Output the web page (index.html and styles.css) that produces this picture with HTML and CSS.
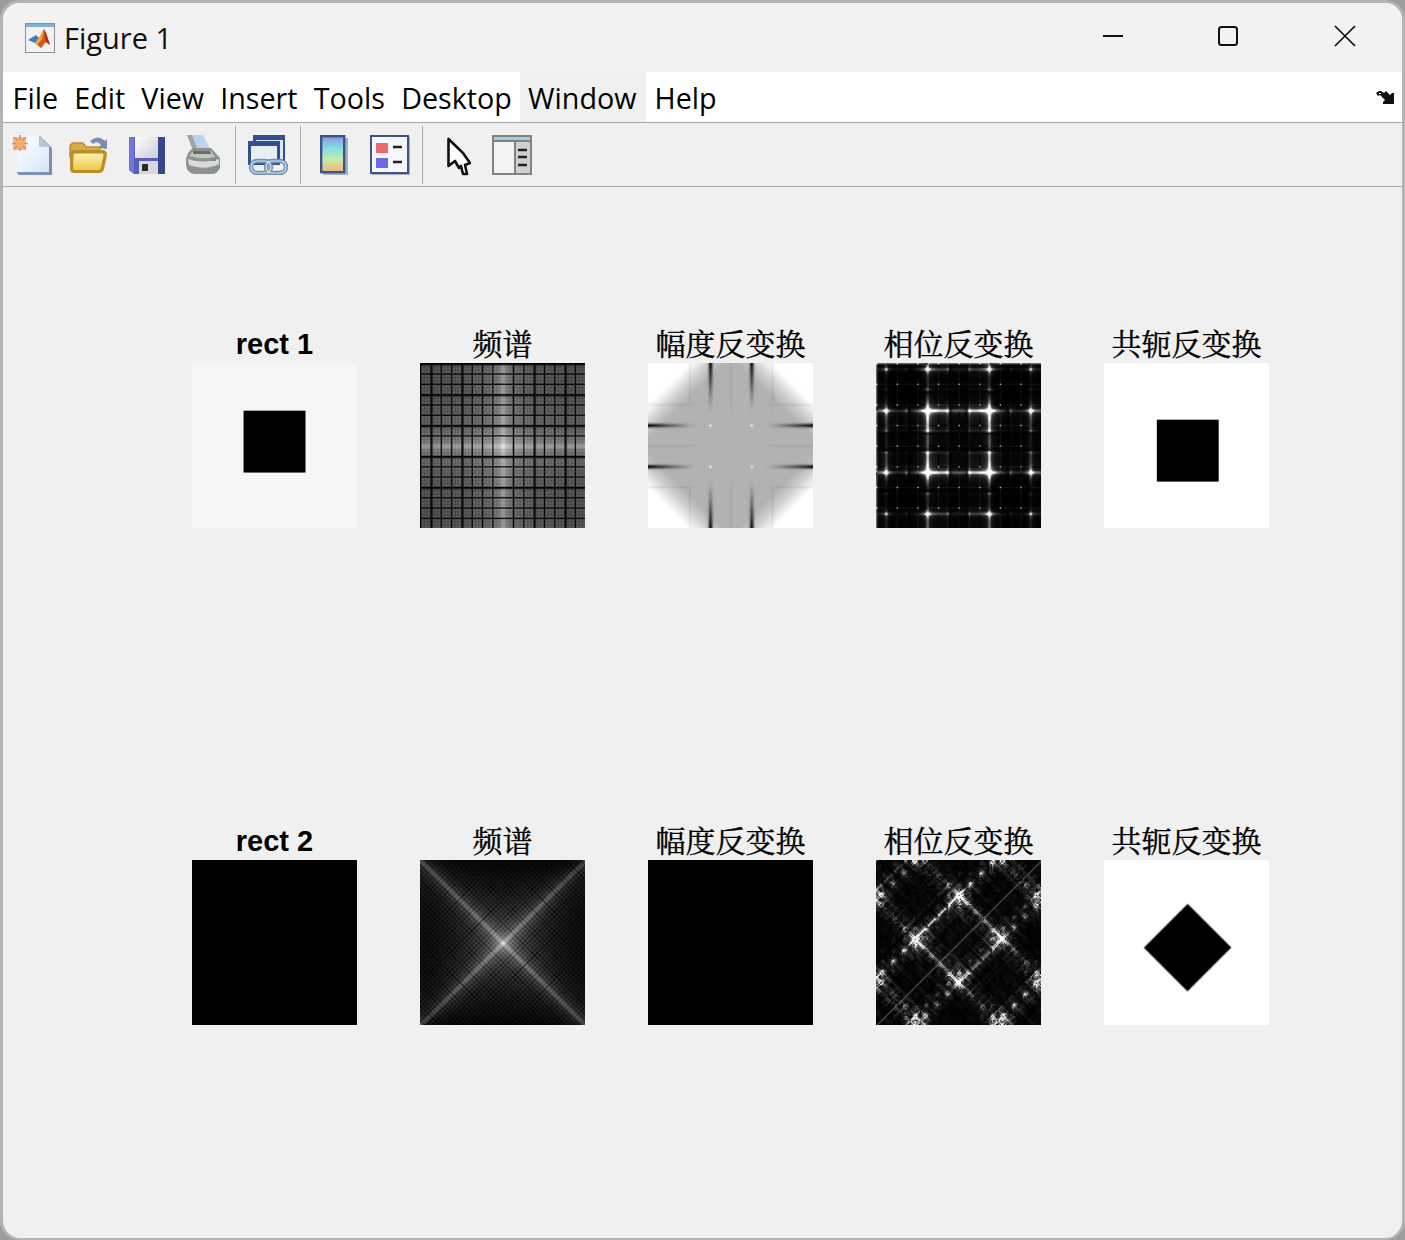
FILE: index.html
```html
<!DOCTYPE html>
<html lang="zh">
<head>
<meta charset="utf-8">
<title>Figure 1</title>
<link rel="stylesheet" href="styles.css">
</head>
<body>
<div class="window">
  <header class="titlebar">
    <svg class="appicon" viewBox="0 0 30 30">
      <rect x="0.5" y="0.5" width="29" height="29" fill="#f2f2f2" stroke="#8a8f96"/>
      <rect x="1" y="1" width="28" height="3" fill="#7fb0d6"/>
      <path d="M3 17 L11 12 L14 15 L10 20 Z" fill="#3f7fc0"/>
      <path d="M10 20 L14 15 L19 6 L21 10 L25 22 L21 19 L16 25 Z" fill="#d9581c"/>
      <path d="M14 15 L19 6 L17 16 L12 22 L10 20 Z" fill="#f0a93a"/>
      <path d="M19 6 L21 10 L25 22 L21 19 Z" fill="#a83214"/>
    </svg>
    <span class="title">Figure 1</span>
    <div class="winbtns">
      <svg class="winbtn" viewBox="0 0 22 22"><path d="M1 11 H21" stroke="#111" stroke-width="2"/></svg>
      <svg class="winbtn winbtn-max" viewBox="0 0 22 22"><rect x="2" y="2" width="18" height="18" rx="2.5" fill="none" stroke="#111" stroke-width="2"/></svg>
      <svg class="winbtn" viewBox="0 0 22 22"><path d="M1 1 L21 21 M21 1 L1 21" stroke="#111" stroke-width="1.7"/></svg>
    </div>
  </header>

  <nav class="menubar">
    <span class="menuitem">File</span>
    <span class="menuitem">Edit</span>
    <span class="menuitem">View</span>
    <span class="menuitem">Insert</span>
    <span class="menuitem">Tools</span>
    <span class="menuitem">Desktop</span>
    <span class="menuitem menuitem-active">Window</span>
    <span class="menuitem">Help</span>
    <svg class="dock" viewBox="0 0 19 15"><path d="M0 3 L3 1 L5 1 L8 3 L10 1 L14 5 L16 3 L18 3 L18 14 L7 14 L7 12 L9 10 L6 7 L4 5 L2 6 Z" fill="#111"/><path d="M3 3 L5 3 L5 4 L3 4 Z" fill="#fff"/></svg>
  </nav>

  <div class="toolbar">
    <svg class="tool tool-new" viewBox="0 0 40 40">
      <defs>
        <linearGradient id="docgrad" x1="0" y1="0" x2="1" y2="1">
          <stop offset="0" stop-color="#ffffff"/><stop offset="1" stop-color="#d6e6f8"/>
        </linearGradient>
        <linearGradient id="foldgrad" x1="0" y1="0" x2="0" y2="1">
          <stop offset="0" stop-color="#fff3ac"/><stop offset="1" stop-color="#eec94e"/>
        </linearGradient>
        <linearGradient id="panelgrad" x1="0" y1="0" x2="1" y2="1">
          <stop offset="0" stop-color="#ffffff"/><stop offset="1" stop-color="#c9ccd6"/>
        </linearGradient>
      </defs>
      <path d="M5 1 H28 L40 13 V40 H8 Q5 40 5 37 Z" fill="#7f90b6"/>
      <path d="M5 1 H27 L37 12 V37 H5 Z" fill="url(#docgrad)"/>
      <path d="M27 1 L38 12 H27 Z" fill="#b9c6e0"/>
      <rect x="1" y="2" width="13" height="13" fill="#eeb596"/>
      <path d="M0 8.5 H16 M8 0 V16 M2 2 L14 14 M14 2 L2 14" stroke="#e58a60" stroke-width="1.6"/>
      <circle cx="8" cy="8.5" r="3.6" fill="#f2b460"/>
    </svg>
    <svg class="tool tool-open" viewBox="0 0 38 40">
      <path d="M21 6 Q29 -1 36 6 L38 4 L38 14 L29 13 L32 10 Q28 5 24 9 Z" fill="#7d8fa8"/>
      <path d="M1 13 Q1 8 5 8 H14 L17 12 H31 V22 H1 Z" fill="#d8ad48" stroke="#b68f2c" stroke-width="1.4"/>
      <path d="M1 20 Q1 15 5 15 H33 Q38 15 38 20 L35 34 Q34 38 30 38 H5 Q1 38 1 34 Z" fill="#b98f28"/>
      <path d="M4.5 20 Q4.5 18.500 6 18.500 H33 Q35 18.500 34.500 20 L32 32 Q31.500 35 29 35 H6 Q4 35 4 33 Z" fill="url(#foldgrad)"/>
    </svg>
    <svg class="tool tool-save" viewBox="0 0 38 40">
      <path d="M1 2 H37 V39 H6 L1 35 Z" fill="#5b5fbc"/>
      <path d="M1 2 H6 V39 L1 35 Z" fill="#6f78d8"/>
      <path d="M30 2 H37 V39 H30 Z" fill="#36478f"/>
      <rect x="7" y="2" width="23" height="21" fill="url(#panelgrad)"/>
      <rect x="11" y="26" width="19" height="13" fill="#d6d8dc"/>
      <rect x="14" y="29" width="6" height="7" fill="#2a2a2a"/>
    </svg>
    <svg class="tool tool-print" viewBox="0 0 36 40">
      <path d="M2 0 H18 L26 16 H10 Z" fill="#bcd3ee"/>
      <path d="M2 0 H7 L13 16 H8 Z" fill="#a0a4a8"/>
      <path d="M1 24 Q3 15 9 13 H26 L35 23 V33 Q32 39 27 39 H9 Q2 38 1 30 Z" fill="#8f918f"/>
      <path d="M3 24 Q18 29 34 24 V29 Q20 36 4 30 Z" fill="#dadcda"/>
      <path d="M8 16 H26 L30 22 Q18 25 4 21 Z" fill="#c4c6c4"/>
      <path d="M8 16 H25 L26 19 H8 Z" fill="#6a6c6a"/>
      <rect x="26" y="23" width="5" height="3" fill="#6f9a6f"/>
    </svg>
    <span class="sep sep-a"></span>
    <svg class="tool tool-link" viewBox="0 0 40 40">
      <rect x="5" y="0" width="32" height="27" fill="#32508f"/>
      <rect x="8" y="5" width="27" height="20" fill="#dfe8f2"/>
      <rect x="0" y="6" width="32" height="24" fill="#32508f"/>
      <rect x="3" y="11" width="26" height="17" fill="#e9eef4"/>
      <g fill="none" stroke="#6f8fb4" stroke-width="4.400">
        <rect x="3" y="26" width="20" height="12" rx="6"/>
        <rect x="18" y="26" width="20" height="12" rx="6"/>
      </g>
      <g fill="none" stroke="#dbe4ee" stroke-width="1.200">
        <rect x="3" y="26" width="20" height="12" rx="6"/>
        <rect x="18" y="26" width="20" height="12" rx="6"/>
      </g>
    </svg>
    <span class="sep sep-b"></span>
    <svg class="tool tool-cbar" viewBox="0 0 28 40">
      <defs>
        <linearGradient id="cbargrad" x1="0" y1="0" x2="0" y2="1">
          <stop offset="0" stop-color="#8d92e0"/><stop offset="0.35" stop-color="#86dfe4"/>
          <stop offset="0.65" stop-color="#c8ecaa"/><stop offset="1" stop-color="#f0b078"/>
        </linearGradient>
      </defs>
      <rect x="3" y="3" width="25" height="37" fill="#a8b0c0"/>
      <rect x="1.2" y="1.2" width="23" height="36" fill="url(#cbargrad)" stroke="#3c5488" stroke-width="2.4"/>
    </svg>
    <svg class="tool tool-legend" viewBox="0 0 40 40">
      <rect x="2" y="2" width="38" height="38" fill="#aab"/>
      <rect x="1" y="1" width="37" height="37" fill="#f4f7fb" stroke="#3c5488" stroke-width="2"/>
      <rect x="6" y="8" width="12" height="10" fill="#e86a6a"/>
      <rect x="6" y="23" width="12" height="10" fill="#6a6ae8"/>
      <path d="M23 12 H32 M23 27 H32" stroke="#222" stroke-width="2.4"/>
    </svg>
    <span class="sep sep-c"></span>
    <svg class="tool tool-arrow" viewBox="0 0 24 40">
      <path d="M1.500 3 V30 L8 25 L12 32 L14 30 L16 38 L20 38 L18 29 L23 27 L16 17 Z" fill="#fff" stroke="#111" stroke-width="2.6" stroke-linejoin="round"/>
    </svg>
    <svg class="tool tool-dock" viewBox="0 0 40 40">
      <rect width="40" height="40" fill="#7b8288"/>
      <rect x="2" y="2" width="36" height="3" fill="#a9cbe0"/>
      <rect x="2" y="7" width="20" height="31" fill="#f3f3f3"/>
      <rect x="24" y="7" width="14" height="31" fill="#d0d0d0"/>
      <path d="M26 15 H35 M26 22 H35 M26 30 H35" stroke="#222" stroke-width="2.4"/>
    </svg>
  </div>

  <main class="figure">
    <div class="axes"><h2 class="axtitle axtitle-en">rect 1</h2><canvas class="plot" width="128" height="128" data-shape="rect" data-mode="orig"></canvas></div>
    <div class="axes"><h2 class="axtitle">频谱</h2><canvas class="plot" width="128" height="128" data-shape="rect" data-mode="spec"></canvas></div>
    <div class="axes"><h2 class="axtitle">幅度反变换</h2><canvas class="plot" width="128" height="128" data-shape="rect" data-mode="mag"></canvas></div>
    <div class="axes"><h2 class="axtitle">相位反变换</h2><canvas class="plot" width="128" height="128" data-shape="rect" data-mode="phase"></canvas></div>
    <div class="axes"><h2 class="axtitle">共轭反变换</h2><canvas class="plot" width="128" height="128" data-shape="rect" data-mode="conj"></canvas></div>
    <div class="axes"><h2 class="axtitle axtitle-en">rect 2</h2><canvas class="plot" width="128" height="128" data-shape="diamond" data-mode="black"></canvas></div>
    <div class="axes"><h2 class="axtitle">频谱</h2><canvas class="plot" width="128" height="128" data-shape="diamond" data-mode="spec"></canvas></div>
    <div class="axes"><h2 class="axtitle">幅度反变换</h2><canvas class="plot" width="128" height="128" data-shape="diamond" data-mode="black"></canvas></div>
    <div class="axes"><h2 class="axtitle">相位反变换</h2><canvas class="plot" width="128" height="128" data-shape="diamond" data-mode="phase"></canvas></div>
    <div class="axes"><h2 class="axtitle">共轭反变换</h2><canvas class="plot" width="128" height="128" data-shape="diamond" data-mode="conj"></canvas></div>
  </main>
</div>
<script src="app.js"></script>
</body>
</html>
```

FILE: styles.css
```css
* { box-sizing: border-box; }
html, body { margin: 0; padding: 0; background: #9d9d9d; }
.window {
  width: 1405px;
  height: 1240px;
  display: flex;
  flex-direction: column;
  background: #f0f0f0;
  border: 3px solid #b4b4b4;
  border-bottom-width: 2px;
  border-radius: 20px;
  overflow: hidden;
}
.titlebar {
  height: 69px;
  flex: none;
  display: flex;
  align-items: center;
  background: #f3f2f2;
  padding: 0 0 0 22px;
}
.appicon { width: 30px; height: 30px; margin-top: 1px; }
.title {
  margin-left: 9px;
  font: 29px "Open Sans", "Noto Sans", sans-serif;
  color: #111;
}
.winbtns { margin-left: auto; display: flex; align-items: center; gap: 93px; padding-right: 46px; margin-top: -3px; }
.winbtn { width: 22px; height: 22px; display: block; }
.winbtn-max { margin-right: 2px; }
.menubar {
  height: 51px;
  flex: none;
  display: flex;
  align-items: center;
  background: #fff;
  border-bottom: 1px solid #a3a3a3;
  padding-left: 1.500px;
}
.menuitem {
  height: 100%;
  padding: 3px 8.100px 0;
  font: 28.700px/46px "Open Sans", "Noto Sans", sans-serif;
  color: #000;
}
.menuitem-active { background: #f0f0f0; padding-right: 10px; }
.dock { width: 19px; height: 15px; margin-left: auto; margin-right: 7px; }
.toolbar {
  height: 64px;
  flex: none;
  display: flex;
  align-items: center;
  background: #f0f0f0;
  border-bottom: 1px solid #a9a9a9;
  padding-left: 9px;
}
.tool { display: block; height: 40px; flex: none; filter: blur(0.5px); }
.tool-new { width: 40px; }
.tool-open { width: 38px; margin-left: 17px; }
.tool-save { width: 38px; margin-left: 21px; }
.tool-print { width: 36px; margin-left: 19px; }
.sep { width: 1px; height: 58px; background: #a9a9a9; flex: none; }
.sep-a { margin-left: 14px; }
.tool-link { width: 40px; margin-left: 12px; }
.sep-b { margin-left: 12px; }
.tool-cbar { width: 28px; margin-left: 19px; }
.tool-legend { width: 40px; margin-left: 22px; }
.sep-c { margin-left: 12px; }
.tool-arrow { width: 24px; margin-left: 24px; margin-top: 2px; }
.tool-dock { width: 40px; margin-left: 21px; }
.figure {
  flex: 1;
  min-height: 0;
  display: grid;
  grid-template-columns: repeat(5, 165px);
  grid-auto-rows: 497px;
  column-gap: 63px;
  padding: 138px 0 0 189px;
}
.axes { display: flex; flex-direction: column; align-items: center; }
.axtitle {
  margin: 0;
  height: 38px;
  font: 400 30px/34px "Noto Serif CJK SC", "Noto Sans CJK SC", serif;
  -webkit-text-stroke: 0.35px #000;
  color: #000;
  white-space: nowrap;
}
.axtitle-en { font: 700 29px/38px "Liberation Sans", sans-serif; -webkit-text-stroke: 0; }
.plot { width: 165px; height: 165px; display: block; }
```

FILE: app.js
```js
const N = 128;

function fft1(re, im, inverse) {
  const n = re.length;
  for (let i = 1, j = 0; i < n; i++) {
    let bit = n >> 1;
    for (; j & bit; bit >>= 1) j ^= bit;
    j ^= bit;
    if (i < j) {
      [re[i], re[j]] = [re[j], re[i]];
      [im[i], im[j]] = [im[j], im[i]];
    }
  }
  for (let len = 2; len <= n; len <<= 1) {
    const ang = (2 * Math.PI / len) * (inverse ? 1 : -1);
    for (let i = 0; i < n; i += len) {
      for (let k = 0; k < len / 2; k++) {
        const wr = Math.cos(ang * k), wi = Math.sin(ang * k);
        const a = i + k, b = a + len / 2;
        const tr = re[b] * wr - im[b] * wi;
        const ti = re[b] * wi + im[b] * wr;
        re[b] = re[a] - tr; im[b] = im[a] - ti;
        re[a] += tr; im[a] += ti;
      }
    }
  }
  if (inverse) for (let i = 0; i < n; i++) { re[i] /= n; im[i] /= n; }
}

function fft2(re, im, inverse) {
  const r = new Float64Array(N), m = new Float64Array(N);
  for (let y = 0; y < N; y++) {
    for (let x = 0; x < N; x++) { r[x] = re[y * N + x]; m[x] = im[y * N + x]; }
    fft1(r, m, inverse);
    for (let x = 0; x < N; x++) { re[y * N + x] = r[x]; im[y * N + x] = m[x]; }
  }
  for (let x = 0; x < N; x++) {
    for (let y = 0; y < N; y++) { r[y] = re[y * N + x]; m[y] = im[y * N + x]; }
    fft1(r, m, inverse);
    for (let y = 0; y < N; y++) { re[y * N + x] = r[y]; im[y * N + x] = m[y]; }
  }
}

/* Black square on a light ground; the diamond is the square turned by 45 degrees, with soft edges. */
function source(shape) {
  const a = new Float64Array(N * N);
  const k = Math.SQRT1_2;
  const SS = 4;
  for (let y = 0; y < N; y++) for (let x = 0; x < N; x++) {
    if (shape === "rect") {
      const inside = x >= 40 && x < 88 && y >= 37 && y < 85;
      a[y * N + x] = inside ? 0 : 245;
    } else {
      let hit = 0;
      for (let j = 0; j < SS; j++) for (let i = 0; i < SS; i++) {
        const px = x + (i + 0.5) / SS - 0.5 - 63.7;
        const py = y + (j + 0.5) / SS - 0.5 - 60.6;
        const u = (px + py) * k, v = (py - px) * k;
        if (Math.abs(u) < 24 && Math.abs(v) < 24) hit++;
      }
      a[y * N + x] = 255 * (1 - hit / (SS * SS));
    }
  }
  return a;
}

function spectrum(shape) {
  const re = source(shape), im = new Float64Array(N * N);
  fft2(re, im, false);
  return { re, im };
}

const THICK_X = [-56, -32, 24, 48];
const THICK_Y = [-64, -40, -16, 8, 32];

function specImage(shape, re, im, out) {
  const scale = shape === "rect" ? 1 : 1 / 100;
  let max = 0;
  for (let y = 0; y < N; y++) for (let x = 0; x < N; x++) {
    const X = (x + N / 2) % N, Y = (y + N / 2) % N;
    const v = Math.log(1 + scale * Math.hypot(re[Y * N + X], im[Y * N + X]));
    out[y * N + x] = v;
    if (v > max) max = v;
  }
  for (let i = 0; i < out.length; i++) out[i] = out[i] / max * 255;
  if (shape === "rect") {
    for (let y = 0; y < N; y++) for (let x = 0; x < N; x++) {
      const dx = x - N / 2, dy = y - N / 2;
      if (THICK_X.includes(dx) || THICK_Y.includes(dy)) out[y * N + x] = 0;
      else if (THICK_X.includes(dx - 1) || THICK_Y.includes(dy - 1)) out[y * N + x] *= 0.35;
    }
  }
}

function phaseImage(shape, re, im, out) {
  const r = new Float64Array(N * N), m = new Float64Array(N * N);
  for (let i = 0; i < r.length; i++) {
    const h = Math.hypot(re[i], im[i]);
    if (h > 1e-6) { r[i] = re[i] / h; m[i] = im[i] / h; } else { r[i] = 1; }
  }
  fft2(r, m, true);
  for (let i = 0; i < r.length; i++) r[i] = Math.abs(r[i]);
  const sorted = Array.from(r).sort((a, b) => a - b);
  const top = sorted[Math.floor(r.length * (shape === "rect" ? 0.985 : 0.98))] || 1;
  for (let i = 0; i < r.length; i++) out[i] = Math.min(255, r[i] / top * 255);
}

function magImage(out) {
  const clamp = (t) => Math.max(0, Math.min(1, t));
  const band = (a, at, width) => Math.exp(-Math.pow((a - at) / width, 2));
  const line = (a, b) => band(a, 16, 1.5) * Math.pow(clamp((b - 26) / 38), 1.3);
  const faint = (a, b) => 0.07 * (band(a, 32, 0.8) + band(a, 0, 0.8)) * clamp((b - 24) / 12);
  for (let y = 0; y < N; y++) for (let x = 0; x < N; x++) {
    const dx = Math.abs(x - 64), dy = Math.abs(y - 64);
    let v = 178 + Math.pow(clamp((dx + dy - 68) / 28), 1.3) * 77;
    v *= 1 - Math.max(line(dx, dy), line(dy, dx));
    v *= 1 - Math.max(faint(dx, dy), faint(dy, dx));
    v += 80 * band(dx, 16, 0.9) * band(dy, 16, 0.9);
    out[y * N + x] = Math.min(255, v);
  }
}

function render(shape, mode) {
  const out = new Float64Array(N * N);
  const src = source(shape);
  if (mode === "orig") return src;
  if (mode === "black") return out;
  if (mode === "mag") { magImage(out); return out; }
  if (mode === "conj") {
    const gain = shape === "rect" ? 255 / 245 : 1;
    for (let y = 0; y < N; y++) for (let x = 0; x < N; x++) {
      out[y * N + x] = src[((N - y) % N) * N + ((N - x) % N)] * gain;
    }
    return out;
  }
  const { re, im } = spectrum(shape);
  if (mode === "spec") specImage(shape, re, im, out);
  if (mode === "phase") phaseImage(shape, re, im, out);
  return out;
}

document.querySelectorAll(".plot").forEach((canvas) => {
  const data = render(canvas.dataset.shape, canvas.dataset.mode);
  const ctx = canvas.getContext("2d");
  const img = ctx.createImageData(N, N);
  for (let i = 0; i < data.length; i++) {
    img.data[i * 4] = img.data[i * 4 + 1] = img.data[i * 4 + 2] = data[i];
    img.data[i * 4 + 3] = 255;
  }
  ctx.putImageData(img, 0, 0);
});
```
